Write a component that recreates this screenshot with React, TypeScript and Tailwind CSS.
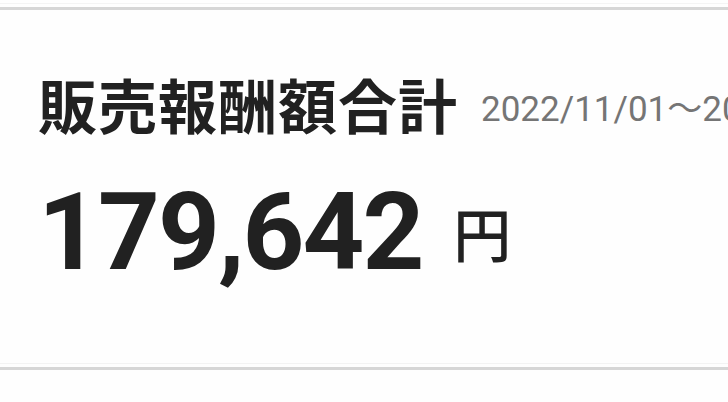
import React from 'react';

const jp = "font-['Roboto','Noto_Sans_CJK_JP',sans-serif]";

function SalesCard() {
  return (
    <div className="h-[357px] flex flex-col bg-[#fefefe]">
      <div className="flex-1 pl-[38px] pt-[59px]">
        <div className="flex items-baseline">
          <h2 className="font-['Noto_Sans_CJK_JP',sans-serif] font-bold text-[59px] leading-[1.2] text-[#212121] tracking-[1px] whitespace-nowrap">
            販売報酬額合計
          </h2>
          <span className={`${jp} relative -top-[8px] ml-[23px] text-[35px] text-[#757575] whitespace-nowrap`}>
            2022/11/01〜2022/11/30
          </span>
        </div>
        <div className="flex items-baseline mt-[33px]">
          <span className="font-['Roboto',sans-serif] font-bold text-[108px] leading-none text-[#212121] tracking-[-2px]">
            179,642
          </span>
          <span className="font-['Noto_Sans_CJK_JP',sans-serif] font-medium text-[58px] leading-none text-[#212121] ml-[31px] relative -top-[12px]">
            円
          </span>
        </div>
      </div>
      <div className="h-px bg-[#f3f3f3]" />
      <div className="h-[3px]" />
    </div>
  );
}

export default function App() {
  return (
    <div className="w-[728px] h-[402px] overflow-hidden bg-[#fefefe]">
      <div className="h-[3px]" />
      <div className="h-px bg-[#f4f4f4]" />
      <div className="h-[3px]" />
      <div className="h-[3px] bg-[#d6d6d6]" />
      <SalesCard />
      <div className="h-[3px] bg-[#d6d6d6]" />
    </div>
  );
}
